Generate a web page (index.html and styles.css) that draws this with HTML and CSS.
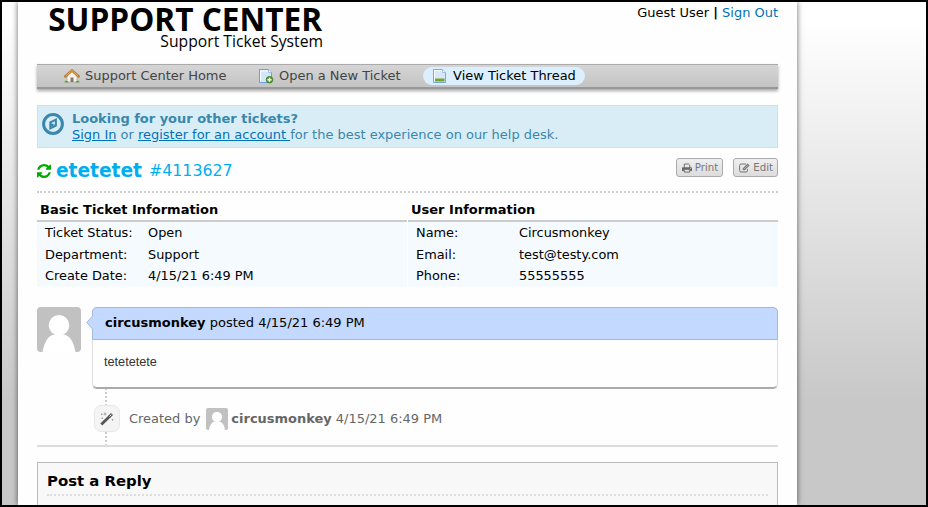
FILE: index.html
```html
<!DOCTYPE html>
<html lang="en">
<head>
  <meta charset="UTF-8">
  <title>Support Center</title>
  <link rel="stylesheet" href="styles.css">
</head>
<body>
  <div id="container">
    <header class="header">
      <div class="logo">
        <div class="logo-title">SUPPORT CENTER</div>
        <div class="logo-sub">Support Ticket System</div>
      </div>
      <p class="user-links">Guest User <b>|</b> <a href="#">Sign Out</a></p>
    </header>

    <nav class="nav">
      <a class="home" href="#">
        <svg width="16" height="16" viewBox="0 0 16 16">
          <path d="M3 8v6h10V8L8 3.500z" fill="#f6f2ec" stroke="#b9aa98" stroke-width=".8"/>
          <path d="M6.500 14v-4.500h3V14z" fill="#8b7468"/>
          <path d="M1.200 8.500L8 2.300l6.800 6.200" fill="none" stroke="#b8752e" stroke-width="2.400" stroke-linejoin="round" stroke-linecap="round"/>
          <path d="M1.500 8.200L8 2.300l6.500 5.900" fill="none" stroke="#eeb05f" stroke-width="1"/>
          <path d="M.5 14.500c0-2.500 3.500-2.500 4 0zM11.500 14.500c.5-2.500 4-2.500 4 0z" fill="#55a630"/>
        </svg>
        Support Center Home
      </a>
      <a class="new" href="#">
        <svg width="16" height="16" viewBox="0 0 16 16">
          <path d="M1.500 1.500h9l3 3v10h-12z" fill="#d3e7fb" stroke="#6f9fd8"/>
          <path d="M2.800 3h7M2.500 13.500V3" fill="none" stroke="#fff"/>
          <path d="M10.500 1.500v3h3" fill="#fff" stroke="#8db4e2" stroke-width=".8"/>
          <circle cx="11.500" cy="11.700" r="3.300" fill="#54a127" stroke="#3c7c1a" stroke-width=".8"/>
          <path d="M11.500 9.700v4M9.500 11.700h4" stroke="#fff" stroke-width="1.400"/>
        </svg>
        Open a New Ticket
      </a>
      <a class="status active" href="#">
        <svg width="16" height="16" viewBox="0 0 16 16">
          <path d="M1.500 1.500h9l3 3v10h-12z" fill="#d8e8fa" stroke="#7ba7dd"/>
          <path d="M2.500 13.500v-11h7.500" fill="none" stroke="#fff"/>
          <path d="M10.500 1.500v3h3" fill="#fff" stroke="#8db4e2" stroke-width=".8"/>
          <path d="M3 10.500h9.500v3H3z" fill="#70a82f"/>
        </svg>
        View Ticket Thread
      </a>
    </nav>

    <div class="alert">
      <svg width="22" height="22" viewBox="0 0 22 22">
        <circle cx="11" cy="11" r="9.400" fill="none" stroke="#3a87ad" stroke-width="3"/>
        <path fill-rule="evenodd" d="M14.900 4.900v8.300l-7.600 3.900V8.800zM12.900 8.300L9 10.300v3.500l3.900-2z" fill="#3a87ad"/>
        <path d="M9 10.300l3.900 1.500L9 13.800z" fill="#3a87ad"/>
      </svg>
      <div>
        <strong>Looking for your other tickets?</strong><br>
        <a href="#">Sign In</a> or <a href="#">register for an account </a>for the best experience on our help desk.
      </div>
    </div>

    <div class="ticket-head">
      <h1>
        <svg width="14" height="14" viewBox="0 0 1536 1536">
          <path d="M1511 928q0 5-1 7-64 268-268 434.500T764 1536q-146 0-282.500-55T238 1324l-129 129q-19 19-45 19t-45-19-19-45V960q0-26 19-45t45-19h448q26 0 45 19t19 45-19 45l-137 137q71 66 161 102t187 36q134 0 250-65t186-179q11-17 53-117 8-23 30-23h192q13 0 22.500 9.500t9.500 22.500zm25-800v448q0 26-19 45t-45 19h-448q-26 0-45-19t-19-45 19-45l138-138Q969 256 768 256q-134 0-250 65T332 500q-11 17-53 117-8 23-30 23H50q-13 0-22.500-9.500T18 608v-7q65-268 270-434.500T768 0q146 0 284 55.500T1297 212l130-129q19-19 45-19t45 19 19 45z" fill="#0a0"/>
        </svg>
        <b>etetetet</b> <small>#4113627</small>
      </h1>
      <div class="buttons">
        <a class="button" href="#">
          <svg width="10" height="10" viewBox="0 0 11 10">
            <path d="M2.500 5V.6h4.800l1.200 1.200V5" fill="none" stroke="#666"/>
            <path fill-rule="evenodd" d="M1 4.300h9q1 0 1 1V8.200H9V7H2v1.200H0V5.300q0-1 1-1zM9 5v.9h1V5z" fill="#666"/>
            <path d="M2.500 6.800v2.700h6V6.800" fill="none" stroke="#666"/>
          </svg>
          Print
        </a>
        <a class="button" href="#">
          <svg width="11" height="10" viewBox="0 0 11 10">
            <path d="M7 1H2Q.6 1 .6 2.500v5Q.6 9 2 9h5q1.500 0 1.500-1.500V6" fill="none" stroke="#777"/>
            <path d="M3.800 7.300V5.200L8.600.4l2 2-4.800 4.900z" fill="#777"/>
            <path d="M4.800 6.300l4-4" stroke="#ddd" stroke-width=".6"/>
          </svg>
          Edit
        </a>
      </div>
    </div>

    <div class="info">
      <section>
        <h2>Basic Ticket Information</h2>
        <dl>
          <dt>Ticket Status:</dt><dd>Open</dd>
          <dt>Department:</dt><dd>Support</dd>
          <dt>Create Date:</dt><dd>4/15/21 6:49 PM</dd>
        </dl>
      </section>
      <section>
        <h2>User Information</h2>
        <dl>
          <dt>Name:</dt><dd>Circusmonkey</dd>
          <dt>Email:</dt><dd>test@testy.com</dd>
          <dt>Phone:</dt><dd>55555555</dd>
        </dl>
      </section>
    </div>

    <div class="thread">
      <div class="entry">
        <svg class="avatar" width="44" height="45" viewBox="0 0 44 45">
          <rect width="44" height="45" fill="#c1c1c1"/>
          <path d="M5.500 45C7.500 34 11.500 28.500 17.500 27.500h9C32.500 28.500 36.500 34 38.500 45z" fill="#fff"/>
          <circle cx="22" cy="18.300" r="10.300" fill="#fff"/>
        </svg>
        <div class="message">
          <svg class="arrow" width="7" height="15" viewBox="0 0 7 15">
            <path d="M7 .5L.7 7.500 7 14.500" fill="#c3d9ff" stroke="#a3b9dc"/>
          </svg>
          <div class="message-head"><b>circusmonkey</b> posted 4/15/21 6:49 PM</div>
          <div class="message-body">tetetetete</div>
        </div>
      </div>

      <div class="event">
        <span class="type-icon">
          <svg width="14" height="14" viewBox="0 0 14 14">
            <path d="M1.300 12.500L9.500 4.500" stroke="#555" stroke-width="2.800"/>
            <path d="M9 5l3-3" stroke="#555" stroke-width="2.800"/>
            <path d="M9.500 4.500l1.900-1.900" stroke="#eee" stroke-width="1"/>
            <path d="M5 .5v3M3.500 2h3M1.700 1.500v1.600M1 2.300h1.500M12.500 7v1.600M11.700 7.800h1.600M2.200 5.500v1.400M1.500 6.200H3" stroke="#888" stroke-width=".7"/>
          </svg>
        </span>
        <span class="created">Created by</span>
        <svg class="avatar-small" width="22" height="22" viewBox="0 0 45 45">
          <rect width="45" height="45" fill="#c1c1c1"/>
          <path d="M6 45C8 34 12 28.500 18 27.500h9C33 28.500 37 34 39 45z" fill="#fff"/>
          <circle cx="22.500" cy="18.300" r="10.500" fill="#fff"/>
        </svg>
        <span><b>circusmonkey</b> 4/15/21 6:49 PM</span>
      </div>
    </div>

    <div class="reply">
      <h2>Post a Reply</h2>
    </div>
  </div>
</body>
</html>
```
FILE: styles.css
```css
* { box-sizing: border-box; }
body {
  margin: 0;
  height: 507px;
  overflow: hidden;
  border: 2px solid #000;
  background: linear-gradient(#fff 0, #fff 20px, #c8c8c8 400px);
  font-family: "DejaVu Sans", sans-serif;
  font-size: 12.970px;
  line-height: 16px;
  color: #000;
}
h1, h2, p, dl, dd { margin: 0; }
a { color: #0072bc; text-decoration: none; }
svg { display: block; flex: none; }

#container {
  width: 779px;
  height: 503px;
  margin-left: 16px;
  padding: 0 19px;
  background: #fefefe;
  box-shadow: 0 0 6px rgba(0, 0, 0, .6);
}

.header {
  display: flex;
  justify-content: space-between;
  height: 62px;
}
.logo {
  width: 286px;
  padding-top: 3px;
  text-align: right;
  font-family: "Open Sans", sans-serif;
}
.logo-title {
  padding-right: 1px;
  font-size: 31.600px;
  font-weight: bold;
  line-height: 28px;
}
.logo-sub {
  font-size: 15.700px;
  line-height: 16px;
}
.user-links { padding-top: 3px; }

.nav {
  display: flex;
  align-items: center;
  height: 25px;
  padding-left: 18px;
  border-top: 1px solid #aaa;
  background: linear-gradient(#d5d5d5, #c2c2c2);
  box-shadow: inset 0 -2px 0 #989898, 0 2px 3px rgba(0, 0, 0, .35);
}
.nav a {
  display: flex;
  align-items: center;
  gap: 5px;
  height: 18px;
  padding: 0 9px;
  margin-right: 13.500px;
  margin-bottom: 2px;
  border-radius: 10px;
  color: #444;
}
.nav a.active { background: #dbefff; color: #000; }

.alert {
  display: flex;
  gap: 8px;
  height: 43px;
  margin-top: 16px;
  padding: 5px 4px 0;
  border: 1px solid #bce8f1;
  background: #d9edf7;
  color: #3a87ad;
}
.alert svg { margin-top: 2px; }
.alert a { text-decoration: underline; }

.ticket-head {
  display: flex;
  justify-content: space-between;
  height: 45px;
  border-bottom: 2px dotted #ccc;
}
.ticket-head h1 {
  display: flex;
  align-items: center;
  gap: 5px;
  height: 46px;
  font-size: 18.600px;
  font-weight: normal;
  color: #00aeef;
}
.ticket-head small { font-size: 15.800px; margin-left: 2px; }
.buttons { display: flex; gap: 10px; padding-top: 10px; }
.button {
  display: flex;
  align-items: center;
  gap: 3px;
  height: 19px;
  padding: 0 4px 0 5px;
  border: 1px solid #aaa;
  border-radius: 3px;
  background: linear-gradient(#efefef, #dcdcdc);
  font-size: 10.200px;
  color: #777;
}

.info {
  display: grid;
  grid-template-columns: 370px 370px;
  gap: 1px;
  padding-top: 8px;
}
.info h2 {
  height: 21px;
  padding-left: 3px;
  border-bottom: 2px solid #ccc;
  font-size: 13px;
  line-height: 17px;
}
.info dl {
  display: grid;
  grid-template-columns: 103px 1fr;
  grid-template-rows: 22px 22px 20px;
  align-items: center;
  height: 65px;
  padding-left: 8px;
  background: #f5faff;
  font-size: 12.900px;
}

.thread {
  height: 140px;
  margin-top: 20px;
  border-bottom: 2px solid #ddd;
}
.entry { display: flex; justify-content: space-between; }
.avatar { border-radius: 4px; }
.message {
  position: relative;
  width: 686px;
  height: 82px;
  border: 1px solid #ddd;
  border-bottom: 2px solid #aaa;
  border-radius: 5px;
}
.message-head {
  height: 33px;
  margin: -1px -1px 0;
  padding: 7px 12px;
  border: 1px solid #a3b9dc;
  border-radius: 5px 5px 0 0;
  background: #c3d9ff;
  font-size: 13px;
}
.arrow { position: absolute; left: -7px; top: 7px; }
.message-body {
  padding: 14px 11px;
  font: 12.700px/16px "Liberation Sans", sans-serif;
  color: #333;
}

.event {
  display: flex;
  align-items: center;
  height: 56px;
  margin-left: 57px;
  padding-top: 3px;
  background: radial-gradient(circle at 1px 1px, #ccc 1px, transparent 1.500px) 11px 3px / 2px 4px repeat-y;
  color: #666;
}
.type-icon {
  display: grid;
  place-items: center;
  width: 26px;
  height: 27px;
  margin-right: 9px;
  border: 1px solid #e8e8e8;
  border-radius: 7px;
  background: #f4f4f4;
}
.avatar-small { margin: 0 3px 0 6px; border-radius: 2px; }

.reply {
  height: 43px;
  margin-top: 15px;
  padding: 9px 9px 0;
  border: 1px solid #bbb;
  border-bottom: 0;
  background: #f8f8f8;
}
.reply h2 {
  height: 24px;
  border-bottom: 2px dotted #ddd;
  font-size: 14.900px;
  line-height: 18px;
}
```
